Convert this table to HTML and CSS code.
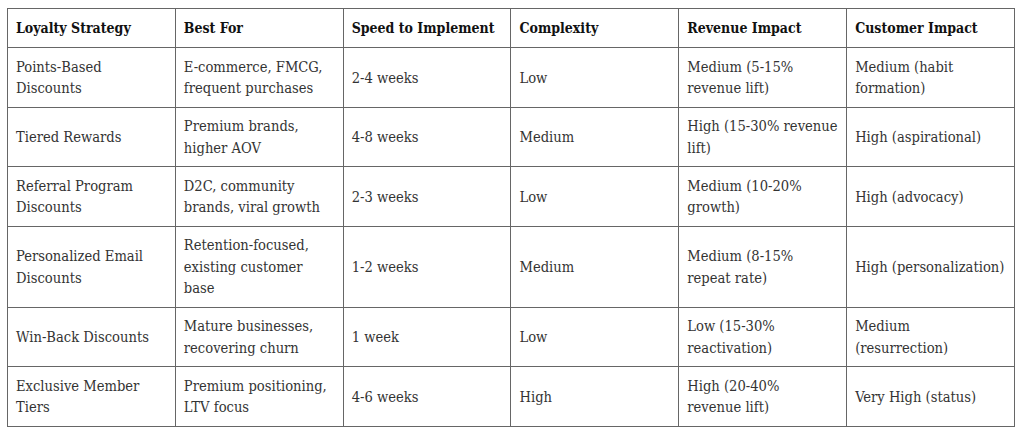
FILE: index.html
```html
<!DOCTYPE html>
<html>
<head>
<meta charset="utf-8">
<link rel="stylesheet" href="styles.css">
</head>
<body>
<table class="grid">
  <colgroup>
    <col class="c"><col class="c"><col class="c"><col class="c"><col class="c"><col class="c">
  </colgroup>
  <thead>
    <tr>
      <th>Loyalty Strategy</th>
      <th>Best For</th>
      <th>Speed to Implement</th>
      <th>Complexity</th>
      <th>Revenue Impact</th>
      <th>Customer Impact</th>
    </tr>
  </thead>
  <tbody>
    <tr>
      <td>Points-Based Discounts</td>
      <td>E-commerce, FMCG, frequent purchases</td>
      <td>2-4 weeks</td>
      <td>Low</td>
      <td>Medium (5-15% revenue lift)</td>
      <td>Medium (habit formation)</td>
    </tr>
    <tr>
      <td>Tiered Rewards</td>
      <td>Premium brands, higher AOV</td>
      <td>4-8 weeks</td>
      <td>Medium</td>
      <td>High (15-30% revenue lift)</td>
      <td>High (aspirational)</td>
    </tr>
    <tr>
      <td>Referral Program Discounts</td>
      <td>D2C, community brands, viral growth</td>
      <td>2-3 weeks</td>
      <td>Low</td>
      <td>Medium (10-20% growth)</td>
      <td>High (advocacy)</td>
    </tr>
    <tr>
      <td>Personalized Email Discounts</td>
      <td>Retention-focused, existing customer base</td>
      <td>1-2 weeks</td>
      <td>Medium</td>
      <td>Medium (8-15% repeat rate)</td>
      <td>High (personalization)</td>
    </tr>
    <tr>
      <td>Win-Back Discounts</td>
      <td>Mature businesses, recovering churn</td>
      <td>1 week</td>
      <td>Low</td>
      <td>Low (15-30% reactivation)</td>
      <td>Medium (resurrection)</td>
    </tr>
    <tr>
      <td>Exclusive Member Tiers</td>
      <td>Premium positioning, LTV focus</td>
      <td>4-6 weeks</td>
      <td>High</td>
      <td>High (20-40%<br>revenue lift)</td>
      <td>Very High (status)</td>
    </tr>
  </tbody>
</table>
</body>
</html>
```
FILE: styles.css
```css
html, body {
  margin: 0;
  padding: 0;
  background: #ffffff;
}
body {
  padding: 8px 9px 0 7px;
  font-family: "DejaVu Serif Condensed", "DejaVu Serif", serif;
  font-size: 14.6px;
  color: #333333;
}
.grid {
  width: 1008px;
  border-collapse: collapse;
  table-layout: fixed;
  border: 1px solid #666666;
}
.grid .c {
  width: 16.666%;
}
.grid th,
.grid td {
  border: 1px solid #666666;
  padding: 7.75px 8px 7.75px 8px;
  line-height: 21.5px;
  text-align: left;
  vertical-align: middle;
}
.grid th {
  font-weight: bold;
  font-size: 14px;
  color: #111111;
  padding-top: 8.5px;
  padding-bottom: 8px;
}
```
